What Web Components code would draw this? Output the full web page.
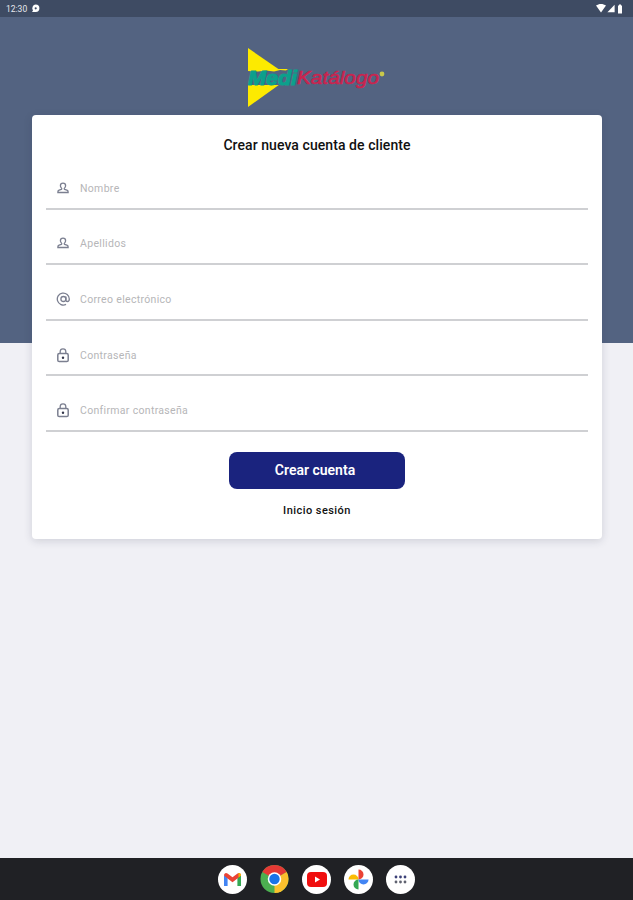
<!DOCTYPE html>
<html lang="es">
<head>
<meta charset="utf-8">
<title>MediKatálogo</title>
<style>
  html, body { margin: 0; height: 100%; }
  body { font-family: Roboto, "Liberation Sans", sans-serif; background: #f0f0f5; }
  #app { display: flex; flex-direction: column; height: 900px; overflow: hidden; }
</style>
</head>
<body>
<div id="app">
  <status-bar></status-bar>
  <signup-screen>
    <brand-logo></brand-logo>
    <signup-card heading="Crear nueva cuenta de cliente">
      <text-field icon="person" label="Nombre"></text-field>
      <text-field icon="person" label="Apellidos"></text-field>
      <text-field icon="at" label="Correo electrónico"></text-field>
      <text-field icon="lock" label="Contraseña"></text-field>
      <text-field icon="lock" label="Confirmar contraseña"></text-field>
    </signup-card>
  </signup-screen>
  <nav-dock></nav-dock>
</div>

<script>
const ICONS = {
  person: `<path d="M7 2.200a2.600 2.600 0 0 1 2.600 2.600c0 1.200-.7 1.900-1.200 2.500-.3.4-.2.8.2 1l2.300.8c.8.3 1.200.9 1.200 1.600v.8H1.900v-.8c0-.7.4-1.300 1.200-1.600l2.300-.8c.4-.2.5-.6.2-1-.5-.6-1.200-1.300-1.200-2.500A2.600 2.600 0 0 1 7 2.200z" fill="none" stroke="#7b7f90" stroke-width="1.300"/>`,
  at: `<circle cx="7.400" cy="7" r="2.500" fill="none" stroke="#7b7f90" stroke-width="1.300"/><path d="M9.900 4.500v3.400c0 1 .7 1.600 1.500 1.600s1.900-.8 1.900-2.500A6 6 0 1 0 10 12.400" fill="none" stroke="#7b7f90" stroke-width="1.300"/>`,
  lock: `<rect x="1.800" y="5.600" width="10.400" height="8" rx="1.400" fill="none" stroke="#7b7f90" stroke-width="1.500"/><path d="M4.200 5.600V3.600a2.800 2.800 0 0 1 5.600 0v2" fill="none" stroke="#7b7f90" stroke-width="1.300"/><circle cx="7" cy="9.700" r="1.200" fill="#33364a"/>`
};

class StatusBar extends HTMLElement {
  constructor() {
    super();
    this.attachShadow({ mode: 'open' });
    this.shadowRoot.innerHTML = `
      <style>
        :host { display: flex; flex: none; height: 17px; background: #3e4b63; color: #fff;
          align-items: center; justify-content: space-between; padding: 0 9px 0 6px; }
        .left, .right { display: flex; align-items: center; gap: 4px; }
        .right { gap: 1px; }
        .time { font: 400 8.500px Roboto, sans-serif; color: #e6e8ee; }
      </style>
      <div class="left">
        <span class="time">12:30</span>
        <svg width="9" height="9" viewBox="0 0 9 9"><path d="M4.700.6a3.700 3.700 0 0 1 0 7.400H1l1-1.500a3.700 3.700 0 0 1 2.700-5.900z" fill="#fff"/><circle cx="4.700" cy="4.300" r="1.100" fill="#3e4b63"/></svg>
      </div>
      <div class="right">
        <svg width="10" height="9" viewBox="0 0 10 9"><path d="M0 1.600C2.800-.5 7.200-.5 10 1.600L5 8.400z" fill="#fff"/></svg>
        <svg width="8" height="9" viewBox="0 0 8 9"><path d="M7.600.8v7.400H.4z" fill="#fff"/></svg>
        <svg width="8" height="10" viewBox="0 0 8 10"><path d="M3 .5h2v1h1v8H2v-8h1z" fill="#fff"/></svg>
      </div>
    `;
  }
}

class SignupScreen extends HTMLElement {
  constructor() {
    super();
    this.attachShadow({ mode: 'open' });
    this.shadowRoot.innerHTML = `
      <style>
        :host { display: flex; flex: 1; flex-direction: column; align-items: center;
          background: linear-gradient(#536381 326px, #f0f0f5 326px); padding-top: 31px; }
      </style>
      <slot></slot>
    `;
  }
}

class BrandLogo extends HTMLElement {
  constructor() {
    super();
    this.attachShadow({ mode: 'open' });
    this.shadowRoot.innerHTML = `
      <style>
        :host { display: block; width: 140px; height: 60px; margin-left: 2px; margin-bottom: 7px; }
        svg { display: block; }
      </style>
      <svg width="140" height="60" viewBox="0 0 140 60">
        <path d="M0 0 L42 29 L0 59z" fill="#fdea00"/>
        <rect x="0" y="21" width="44" height="16" fill="#536381"/>
        <path d="M0 21h40l-2 1.500-6-.5-6 1.500-8-1-8 1-10-.5z" fill="#fdea00"/>
        <text x="0" y="36.500" font-family="Liberation Sans, sans-serif" font-size="21" font-weight="700" font-style="italic" fill="#0ca08c" stroke="#0ca08c" stroke-width="1.100" textLength="49" lengthAdjust="spacingAndGlyphs">Medi</text>
        <text x="49" y="36" font-family="Liberation Sans, sans-serif" font-size="19" font-style="italic" fill="#c9244f" stroke="#c9244f" stroke-width=".6" textLength="82" lengthAdjust="spacingAndGlyphs">Katálogo</text>
        <circle cx="134" cy="26" r="2.400" fill="#c9c84a"/>
      </svg>
    `;
  }
}

class SignupCard extends HTMLElement {
  constructor() {
    super();
    this.attachShadow({ mode: 'open' });
    this.shadowRoot.innerHTML = `
      <style>
        :host { display: flex; flex-direction: column; align-items: center; box-sizing: border-box;
          width: 570px; height: 424px; margin-left: 1px; padding: 22px 14px 0; background: #fff; border-radius: 4px;
          box-shadow: 0 2px 8px rgba(40, 45, 70, .16); }
        h1 { margin: 0 0 1px; font: 500 14px/16px Roboto, sans-serif; color: #111; letter-spacing: .07px; }
        .fields { display: flex; flex-direction: column; align-self: stretch; }
        button { width: 176px; height: 37px; margin-top: 20px; border: 0; border-radius: 8px; padding: 0 4px 0 0;
          background: #1a237e; color: #fff; font: 600 14px Roboto, sans-serif; }
        a { margin-top: 15px; font: 500 11px/14px Roboto, sans-serif; color: #111; letter-spacing: .45px; }
      </style>
      <h1></h1>
      <div class="fields"><slot></slot></div>
      <button type="button">Crear cuenta</button>
      <a>Inicio sesión</a>
    `;
    this.shadowRoot.querySelector('h1').textContent = this.getAttribute('heading');
  }
}

class TextField extends HTMLElement {
  constructor() {
    super();
    this.attachShadow({ mode: 'open' });
    this.shadowRoot.innerHTML = `
      <style>
        :host { display: flex; align-items: center; box-sizing: border-box; height: 55.600px;
          padding: 15px 0 0 10px; gap: 10px; border-bottom: 2px solid #cfd0d3; }
        svg { flex: none; }
        span { font: 400 10.500px Roboto, sans-serif; color: #b6b6b8; letter-spacing: .32px; }
      </style>
      <svg width="14" height="15" viewBox="0 0 14 15">${ICONS[this.getAttribute('icon')]}</svg>
      <span>${this.getAttribute('label')}</span>
    `;
  }
}

class NavDock extends HTMLElement {
  constructor() {
    super();
    this.attachShadow({ mode: 'open' });
    this.shadowRoot.innerHTML = `
      <style>
        :host { display: flex; flex: none; height: 42px; background: #202125; align-items: center;
          justify-content: center; gap: 13px; box-sizing: border-box; }
        .app { width: 29px; height: 29px; border-radius: 50%; background: #fff; display: flex;
          align-items: center; justify-content: center; }
      </style>
      <div class="app">
        <svg width="19" height="15" viewBox="0 0 19 15">
          <path d="M1 14V3.500h3.600V14z" fill="#4285f4"/>
          <path d="M14.400 14V3.500H18V14z" fill="#34a853"/>
          <path d="M1 3.500C1 1 3 .3 4.500 1.400L9.500 5.200 14.500 1.400C16 .3 18 1 18 3.500L14.400 6.600 9.500 10.300 4.600 6.600z" fill="#ea4335"/>
          <path d="M15.500 1.100C16.800.8 18 1.500 18 3.500L15.500 5.600z" fill="#f4b400"/>
        </svg>
      </div>
      <div class="app" style="background:none">
        <svg width="30" height="30" viewBox="0 0 30 30">
          <circle cx="15" cy="15" r="14.500" fill="#4caf50"/>
          <path d="M15 15 L2.400 7.800A14.500 14.500 0 0 1 27.600 7.800z" fill="#e53935"/>
          <path d="M15 15 L27.600 7.800A14.500 14.500 0 0 1 15 29.500z" fill="#fbc02d"/>
          <circle cx="15" cy="15" r="7" fill="#fff"/>
          <circle cx="15" cy="15" r="5.400" fill="#1a73e8"/>
        </svg>
      </div>
      <div class="app">
        <svg width="20" height="15" viewBox="0 0 20 15">
          <rect width="20" height="15" rx="4" fill="#f00f0f"/>
          <path d="M8 4.500l5 3-5 3z" fill="#fff"/>
        </svg>
      </div>
      <div class="app">
        <svg width="21" height="21" viewBox="0 0 21 21">
          <path d="M10.500 10.500H.5A5 5 0 0 1 10.500 10.500z" fill="#fbbc04"/>
          <path d="M10.500 10.500V.5A5 5 0 0 1 10.500 10.500z" fill="#ea4335"/>
          <path d="M10.500 10.500H20.500A5 5 0 0 1 10.500 10.500z" fill="#4285f4"/>
          <path d="M10.500 10.500V20.500A5 5 0 0 1 10.500 10.500z" fill="#34a853"/>
        </svg>
      </div>
      <div class="app">
        <svg width="13" height="9" viewBox="0 0 13 9">
          <g fill="#3c4178"><circle cx="2" cy="2" r="1.400"/><circle cx="6.500" cy="2" r="1.400"/><circle cx="11" cy="2" r="1.400"/></g>
          <g fill="#5f6270"><circle cx="2" cy="7" r="1.400"/><circle cx="6.500" cy="7" r="1.400"/><circle cx="11" cy="7" r="1.400"/></g>
        </svg>
      </div>
    `;
  }
}

customElements.define('status-bar', StatusBar);
customElements.define('signup-screen', SignupScreen);
customElements.define('brand-logo', BrandLogo);
customElements.define('signup-card', SignupCard);
customElements.define('text-field', TextField);
customElements.define('nav-dock', NavDock);
</script>
</body>
</html>
